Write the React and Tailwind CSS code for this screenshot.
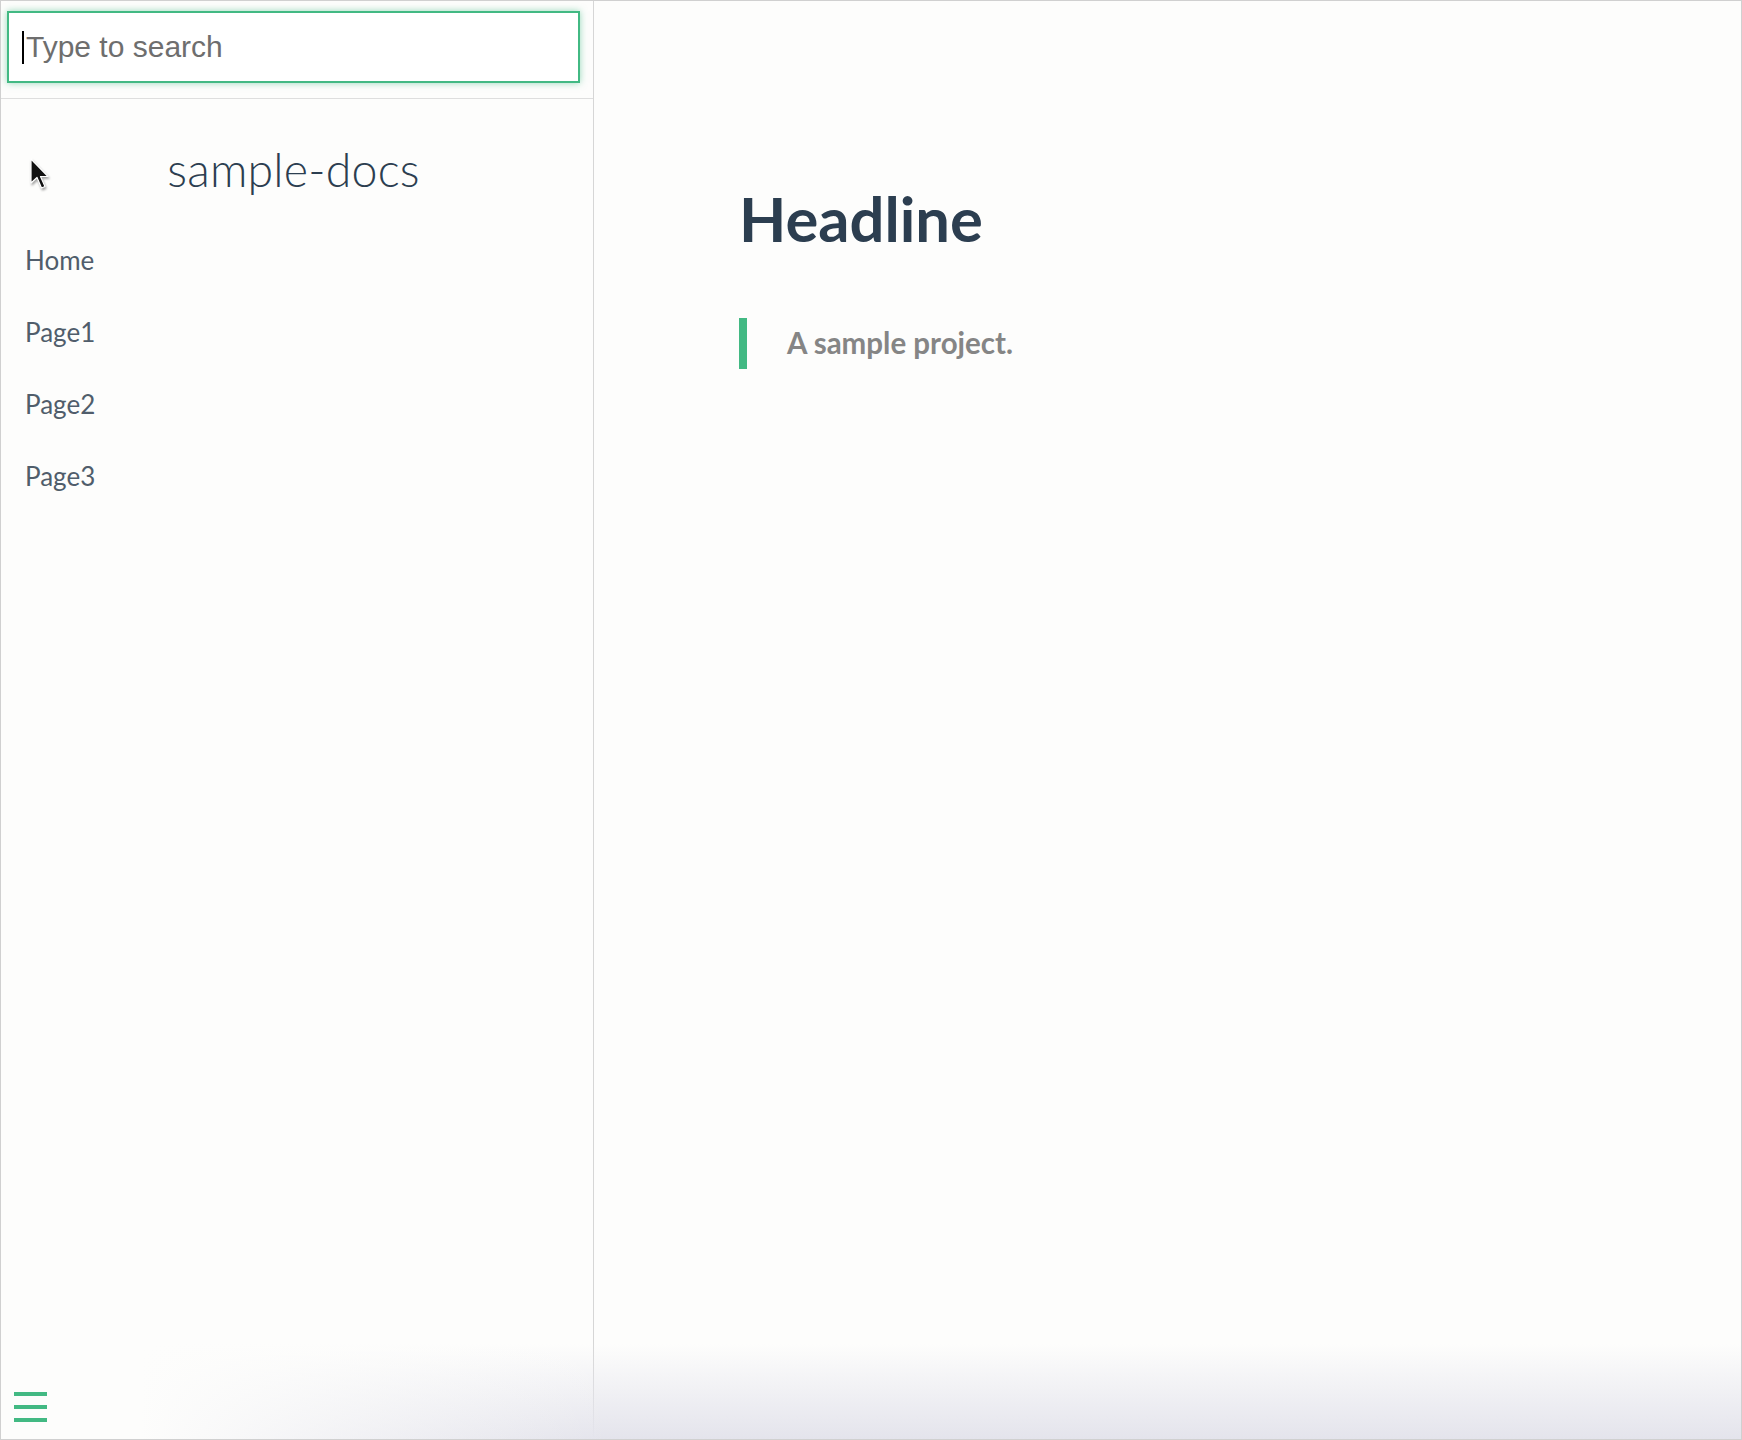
import React from 'react';

const pages = ['Home', 'Page1', 'Page2', 'Page3'];

const Pointer = () => (
  <svg width="22" height="36" viewBox="0 0 22 34" className="drop-shadow-[1px_2px_1px_rgba(0,0,0,0.35)]">
    <path d="M1 1 L1 25 L7 19.5 L11.5 30 L15 28.5 L10.5 18.5 L18 18.5 Z" fill="#111" stroke="#fff" strokeWidth="1.2" strokeLinejoin="round" />
  </svg>
);

const App = () => {
  return (
    <div className="relative flex h-[1440px] w-full overflow-hidden border border-[#d0d0d0] bg-[#fdfdfc] font-['Lato',sans-serif]">
      {/* Sidebar */}
      <aside className="flex w-[593px] shrink-0 flex-col border-r border-[#d6d6d6]">
        <div className="border-b border-[#dedede] pl-[6px] pr-[13px] pt-[10px] pb-[15px]">
          <div className="relative">
            <input
              type="search"
              placeholder="Type to search"
              className="h-[72px] w-full border-2 border-[#42b983] bg-white pl-[17px] font-['Liberation_Sans',Arial,sans-serif] text-[30px] text-[#333] caret-transparent shadow-[0_0_7px_rgba(66,185,131,0.55)] outline-none placeholder:text-[#6e6e6e]"
            />
            <span className="absolute left-[15px] top-[20px] h-[33px] w-[2px] bg-black" />
          </div>
        </div>

        <div className="relative mt-[38px] flex h-[64px] items-center justify-center pr-[7px]">
          <span className="absolute left-[29px] top-[20px]">
            <Pointer />
          </span>
          <h1 className="text-[46.5px] font-light leading-none tracking-[0.2px] text-[#2c3e50]">sample-docs</h1>
        </div>

        <ul className="mt-[42px] flex flex-col gap-[38px] pl-[24px]">
          {pages.map((p) => (
            <li key={p}>
              <a className="text-[26px] leading-[34px] text-[#505d6b]">{p}</a>
            </li>
          ))}
        </ul>

        <div className="relative z-10 mt-auto mb-[17px] ml-[13px] flex w-[33px] flex-col gap-[9px]">
          <span className="h-[4px] bg-[#42b983]" />
          <span className="h-[4px] bg-[#42b983]" />
          <span className="h-[4px] bg-[#42b983]" />
        </div>
      </aside>

      {/* Content */}
      <main className="flex-1 pl-[145px] pt-[181px]">
        <h1 className="text-[61.5px] font-bold leading-[72px] text-[#2c3e50]">Headline</h1>
        <blockquote className="mt-[64px] flex h-[51px] items-center border-l-[8px] border-[#42b983] pl-[40px]">
          <p className="text-[29.5px] font-bold text-[#858585]">A sample project.</p>
        </blockquote>
      </main>

      {/* bottom fade */}
      <div className="pointer-events-none absolute inset-x-0 bottom-0 h-[95px] bg-[linear-gradient(to_right,#fdfdfc_8%,rgba(253,253,252,0)_35%),linear-gradient(to_bottom,rgba(230,230,238,0),#e4e4ec)]" />
    </div>
  );
};

export default App;
